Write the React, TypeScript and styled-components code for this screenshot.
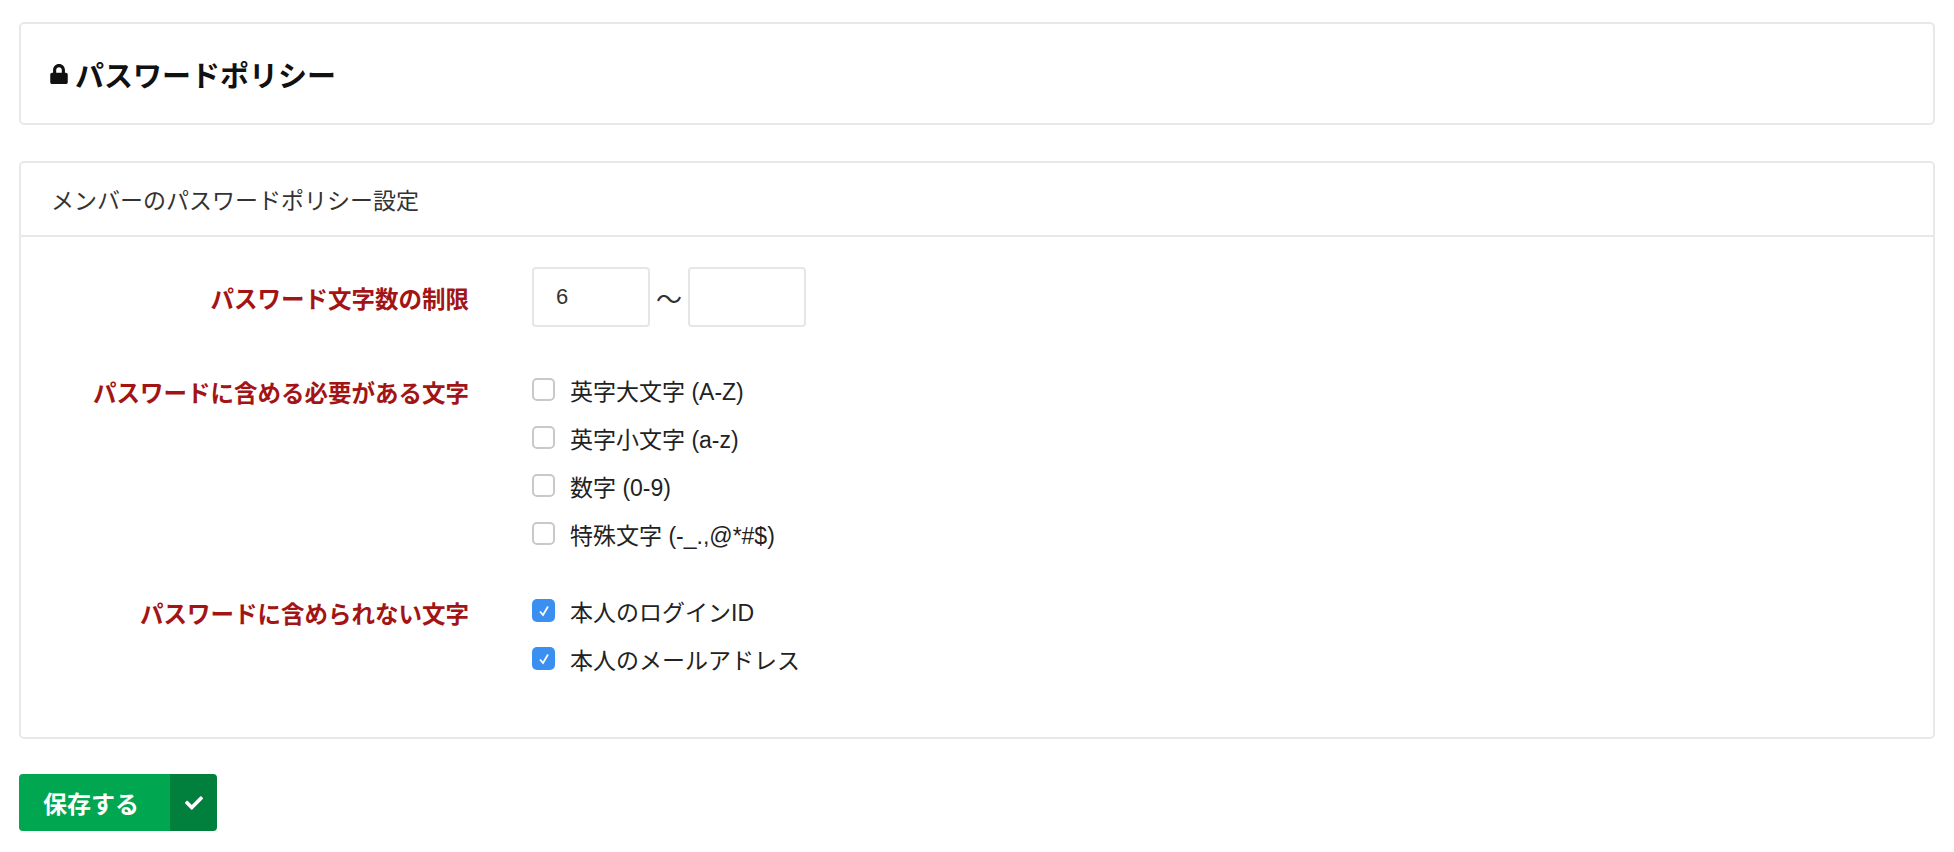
import styled, { createGlobalStyle } from "styled-components";
import { FaLock, FaCheck } from "react-icons/fa";

const Global = createGlobalStyle`
  body {
    margin: 0;
    background: #fff;
    font-family: "Liberation Sans", "Noto Sans CJK JP", sans-serif;
    color: #333;
  }
`;

const Page = styled.div`
  padding: 22px 19px 0 19px;
  display: flex;
  flex-direction: column;
`;
const Panel = styled.div`
  border: 2px solid #e8e8e8;
  border-radius: 5px;
  background: #fff;
`;
const TitlePanel = styled(Panel)`
  height: 103px;
  box-sizing: border-box;
  display: flex;
  align-items: center;
  padding-left: 28px;
  margin-bottom: 36px;
`;
const Title = styled.h1`
  margin: 0;
  font-size: 29px;
  font-weight: bold;
  color: #111;
  display: flex;
  align-items: center;
  gap: 6px;
`;
const PanelHeader = styled.div`
  height: 74px;
  box-sizing: border-box;
  border-bottom: 2px solid #e8e8e8;
  display: flex;
  align-items: center;
  padding-left: 30px;
  font-size: 23px;
  color: #333;
`;
const PanelBody = styled.div`
  padding: 30px 0 64px;
  display: flex;
  flex-direction: column;
  gap: 48px;
`;
const Row = styled.div`
  display: grid;
  grid-template-columns: 448px 1fr;
  column-gap: 63px;
  align-items: start;
`;
const Label = styled.div<{ top: number }>`
  text-align: right;
  font-size: 23.5px;
  font-weight: bold;
  color: #a31515;
  padding-top: ${(p) => p.top}px;
`;
const Range = styled.div`
  display: flex;
  align-items: center;
  gap: 6px;
`;
const NumInput = styled.input`
  width: 118px;
  height: 60px;
  box-sizing: border-box;
  border: 2px solid #e6e6e6;
  border-radius: 4px;
  padding: 0 22px;
  font-size: 22px;
  font-family: "Liberation Sans", sans-serif;
  color: #333;
  outline: none;
`;
const Tilde = styled.span`
  font-size: 26px;
  color: #333;
`;
const Checks = styled.div`
  display: flex;
  flex-direction: column;
  gap: 19px;
`;
const CheckRow = styled.label`
  display: flex;
  align-items: center;
  gap: 15px;
  font-size: 23px;
  color: #222;
  height: 29px;
`;
const Box = styled.span<{ checked: boolean }>`
  width: 23px;
  height: 23px;
  box-sizing: border-box;
  border-radius: 5px;
  border: ${(p) => (p.checked ? "none" : "2px solid #c9c9c9")};
  background: ${(p) => (p.checked ? "#3b8ff0" : "#fff")};
  display: flex;
  align-items: center;
  justify-content: center;
`;
const SaveButton = styled.button`
  margin-top: 35px;
  width: 198px;
  height: 57px;
  border: none;
  border-radius: 4px;
  padding: 0;
  display: flex;
  overflow: hidden;
  cursor: pointer;
  font-family: "Liberation Sans", "Noto Sans CJK JP", sans-serif;
`;
const SaveText = styled.span`
  flex: 1;
  background: #00a650;
  color: #fff;
  font-size: 24px;
  font-weight: bold;
  display: flex;
  align-items: center;
  padding-left: 24px;
`;
const SaveIcon = styled.span`
  width: 47px;
  background: #00803c;
  color: #fff;
  display: flex;
  align-items: center;
  justify-content: center;
  font-size: 18px;
`;

const Check = ({ checked, label }: { checked: boolean; label: string }) => (
  <CheckRow>
    <Box checked={checked}>
      {checked && (
        <svg width="14" height="14" viewBox="0 0 14 14">
          <path d="M3 7.5 L6 11 L11 2.5" fill="none" stroke="#fff" strokeWidth="1.8" />
        </svg>
      )}
    </Box>
    {label}
  </CheckRow>
);

export default function App() {
  return (
    <>
      <Global />
      <Page>
        <TitlePanel>
          <Title>
            <FaLock size={20} />
            パスワードポリシー
          </Title>
        </TitlePanel>
        <Panel>
          <PanelHeader>メンバーのパスワードポリシー設定</PanelHeader>
          <PanelBody>
            <Row>
              <Label top={14}>パスワード文字数の制限</Label>
              <Range>
                <NumInput defaultValue="6" />
                <Tilde>〜</Tilde>
                <NumInput defaultValue="" />
              </Range>
            </Row>
            <Row>
              <Label top={0}>パスワードに含める必要がある文字</Label>
              <Checks>
                <Check checked={false} label="英字大文字 (A-Z)" />
                <Check checked={false} label="英字小文字 (a-z)" />
                <Check checked={false} label="数字 (0-9)" />
                <Check checked={false} label="特殊文字 (-_.,@*#$)" />
              </Checks>
            </Row>
            <Row>
              <Label top={0}>パスワードに含められない文字</Label>
              <Checks>
                <Check checked={true} label="本人のログインID" />
                <Check checked={true} label="本人のメールアドレス" />
              </Checks>
            </Row>
          </PanelBody>
        </Panel>
        <div>
          <SaveButton>
            <SaveText>保存する</SaveText>
            <SaveIcon>
              <FaCheck />
            </SaveIcon>
          </SaveButton>
        </div>
      </Page>
    </>
  );
}
